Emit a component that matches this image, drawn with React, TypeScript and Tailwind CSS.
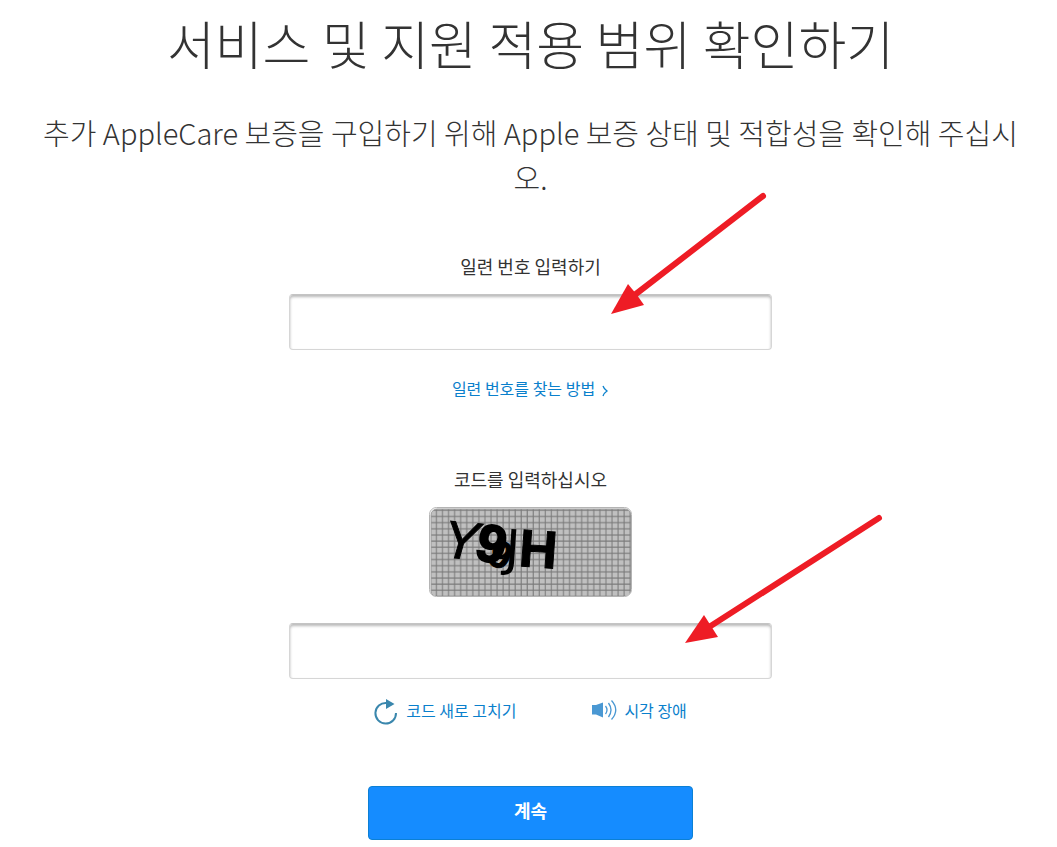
import React from 'react';

const inputClass =
  'block h-14 w-full rounded border border-[#d6d6d6] border-t-[#c4c4c4] bg-white px-4 text-lg text-[#333333] shadow-[inset_0_2px_3px_rgba(0,0,0,0.28)] outline-none';

const linkClass = 'text-base leading-6 text-[#0a80cc]';

function SerialArrow() {
  return (
    <svg className="pointer-events-none absolute left-[321px] -top-[104px]" width="160" height="126" viewBox="610 190 160 126" aria-hidden="true">
      <path d="M763 196 L632 297" stroke="#ee1c25" strokeWidth="6" strokeLinecap="round" />
      <path d="M611 314 L628 284 L637 295 L644 305 Z" fill="#ee1c25" />
    </svg>
  );
}

function CodeArrow() {
  return (
    <svg className="pointer-events-none absolute left-[391px] -top-[113px]" width="210" height="140" viewBox="680 510 210 140" aria-hidden="true">
      <path d="M879 518 L706 629" stroke="#ee1c25" strokeWidth="6" strokeLinecap="round" />
      <path d="M685 643 L704 615 L711 626 L718 637 Z" fill="#ee1c25" />
    </svg>
  );
}

function Captcha() {
  return (
    <svg className="mt-3.5 block" width="203" height="90" viewBox="0 0 203 90" role="img" aria-label="Y99JH">
      <defs>
        <pattern id="grid" x="3" y="5" width="6.05" height="6.15" patternUnits="userSpaceOnUse">
          <rect width="6.05" height="6.15" fill="#c0c0c0" />
          <path d="M4.5 0V6.15M0 4.5H6.05" stroke="#787878" strokeWidth="1" />
        </pattern>
        <clipPath id="frame">
          <rect x="1" y="1" width="201" height="88" rx="6" />
        </clipPath>
      </defs>
      <rect x="0.5" y="0.5" width="202" height="89" rx="7" fill="#ffffff" stroke="#b4b4b4" />
      <g clipPath="url(#frame)">
        <rect x="2" y="2" width="200" height="88" rx="6" fill="url(#grid)" stroke="#9a9a9a" />
        <g fill="#000000">
          <text transform="translate(13 50) rotate(5)" fontFamily="Liberation Sans" fontStyle="italic" fontSize="53" stroke="#000000" strokeWidth="1">Y</text>
          <text transform="translate(44 51) rotate(14)" fontFamily="Liberation Sans" fontWeight="bold" fontSize="53" stroke="#000000" strokeWidth="2">9</text>
          <text transform="translate(57 56) rotate(22)" fontFamily="Liberation Sans" fontWeight="bold" fontSize="38" stroke="#000000" strokeWidth="1">9</text>
          <text transform="translate(75 58) rotate(4)" fontFamily="DejaVu Sans" fontSize="50">J</text>
          <text transform="translate(89 59) rotate(4)" fontFamily="Liberation Sans" fontWeight="bold" fontSize="53" stroke="#000000" strokeWidth="1">H</text>
        </g>
      </g>
    </svg>
  );
}

function RefreshIcon() {
  return (
    <svg className="mt-1" width="24" height="26" viewBox="0 0 24 26" aria-hidden="true">
      <path d="M12.5 4 A10.3 10.3 0 1 0 22 14" fill="none" stroke="#3a87ad" strokeWidth="2" />
      <path d="M12 0 L20.5 5 L12 10 Z" fill="#3a87ad" />
    </svg>
  );
}

function SpeakerIcon() {
  return (
    <svg width="26" height="22" viewBox="0 0 26 22" aria-hidden="true">
      <path d="M0 6H4L11 3.5V18.5L4 15.5H0Z" fill="#4a98d3" />
      <g fill="none" stroke="#4a98d3" strokeWidth="1.3">
        <path d="M13.5 7 Q16.5 11 13.5 15" />
        <path d="M16.5 4 Q21.5 11 16.5 18" />
        <path d="M19.5 1.5 Q28 11 19.5 20.5" />
      </g>
    </svg>
  );
}

export default function App() {
  return (
    <main className="min-h-screen overflow-x-hidden bg-white pr-[38px] pb-1 pl-[42px] font-['Noto_Sans_CJK_KR',sans-serif] text-[#333333]">
      <h1 className="pt-[7px] text-center text-[52px] leading-[72px] font-light">서비스 및 지원 적용 범위 확인하기</h1>
      <p className="mt-[31px] text-center text-[29px] leading-[45px] font-light">
        추가 AppleCare 보증을 구입하기 위해 Apple 보증 상태 및 적합성을 확인해 주십시오.
      </p>
      <form className="mx-auto mt-[52px] flex w-full max-w-[483px] flex-col items-center" onSubmit={(e) => e.preventDefault()}>
        <label htmlFor="serial" className="text-lg leading-7">일련 번호 입력하기</label>
        <div className="relative mt-3.5 w-full">
          <input id="serial" type="text" className={inputClass} />
          <SerialArrow />
        </div>
        <a href="#find" className={`${linkClass} mt-[26px] flex items-center gap-1.5`}>
          일련 번호를 찾는 방법
          <svg className="mt-1.5" width="8" height="12" viewBox="0 0 8 12" aria-hidden="true">
            <path d="M2 1 Q3 4 6 6 Q3 8 2 11" fill="none" stroke="#0a80cc" strokeWidth="1.3" />
          </svg>
        </a>
        <label htmlFor="code" className="mt-[65px] text-lg leading-7">코드를 입력하십시오</label>
        <Captcha />
        <div className="relative mt-[26px] w-full">
          <input id="code" type="text" className={inputClass} />
          <CodeArrow />
        </div>
        <div className="mt-4 flex w-full items-center justify-center gap-[76px]">
          <button type="button" className={`${linkClass} flex items-center gap-2`}>
            <RefreshIcon />
            코드 새로 고치기
          </button>
          <button type="button" className={`${linkClass} flex items-center gap-1.5`}>
            <SpeakerIcon />
            시각 장애
          </button>
        </div>
        <button type="submit" className="mt-[61px] h-[54px] w-full max-w-[325px] rounded border border-[#0c80d4] bg-[#158cff] pb-1.5 text-lg font-bold text-white">
          계속
        </button>
      </form>
    </main>
  );
}
